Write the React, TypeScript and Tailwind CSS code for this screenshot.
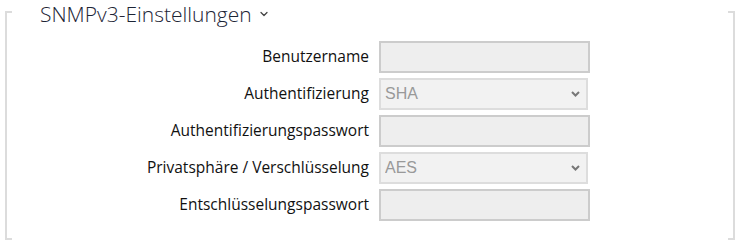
import { ChevronDown } from 'lucide-react';

const rows = [
  { label: 'Benutzername', type: 'input' },
  { label: 'Authentifizierung', type: 'select', value: 'SHA' },
  { label: 'Authentifizierungspasswort', type: 'input' },
  { label: 'Privatsphäre / Verschlüsselung', type: 'select', value: 'AES' },
  { label: 'Entschlüsselungspasswort', type: 'input' },
];

function Chevron({ className }: { className?: string }) {
  return (
    <svg width="9" height="6" viewBox="0 0 9 6" className={className}>
      <path d="M1 1 L4.5 4.5 L8 1" fill="none" stroke="currentColor" strokeWidth="2" />
    </svg>
  );
}

export default function App() {
  return (
    <div className="w-[747px] h-[249px] bg-white flex pl-[5px] pr-[12px] font-['Open_Sans',sans-serif]">
      <div className="w-[7px] mt-[11px] h-[229px] border-2 border-r-0 border-[#dcdcdc]" />

      <div className="flex-1">
        <div className="flex items-center ml-[28px] h-[30px] text-[21px] font-light leading-[26px] text-[#1c2435]">
          <span className="-mt-[3px]">SNMPv3-Einstellungen</span>
          <ChevronDown size={12} strokeWidth={2.5} className="ml-[6px] -mt-[3px] text-[#444]" />
        </div>

        <div className="mt-[11px] grid grid-cols-[357px_211px] gap-x-[10px] gap-y-[5px]">
          {rows.map((row) => (
            <div key={row.label} className="contents">
              <div className="h-[32px] flex items-center justify-end text-[15.5px] text-[#111111] whitespace-nowrap">
                {row.label}
              </div>
              {row.type === 'input' ? (
                <input
                  type="text"
                  disabled
                  className="h-[32px] w-[211px] border-2 border-[#cccccc] bg-[#eeeeee] outline-none"
                />
              ) : (
                <div className="relative h-[32px] w-[209px]">
                  <select
                    disabled
                    defaultValue={row.value}
                    className="appearance-none h-full w-full border-2 border-[#dddddd] bg-[#f2f2f2] pl-[4px] text-[16px] text-[#999999] font-['Liberation_Sans',Arial,sans-serif] outline-none"
                  >
                    <option>{row.value}</option>
                  </select>
                  <Chevron className="absolute right-[8px] top-[13px] text-[#777]" />
                </div>
              )}
            </div>
          ))}
        </div>
      </div>

      <div className="w-[7px] mt-[11px] h-[229px] border-2 border-l-0 border-[#dcdcdc]" />
    </div>
  );
}
